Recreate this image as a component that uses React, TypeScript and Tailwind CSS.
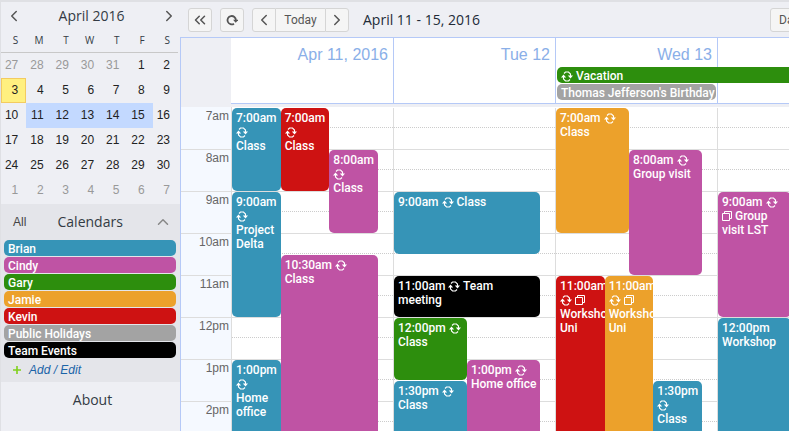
import clsx from 'clsx';
import { ChevronLeft, ChevronRight, ChevronUp, ChevronsLeft } from 'lucide-react';

const HOUR_HEIGHT = 42;
const FIRST_HOUR = 7;

const COLORS = {
    brian: 'bg-[#3694b7]',
    cindy: 'bg-[#bf53a4]',
    gary: 'bg-[#2d8e0d]',
    jamie: 'bg-[#eca12b]',
    kevin: 'bg-[#ce1212]',
    holidays: 'bg-[#a3a3a3]',
    team: 'bg-black',
};

type Owner = keyof typeof COLORS;

interface CalEvent {
    owner: Owner;
    time: string;
    title: string;
    start: number;
    hours: number;
    lane?: number;
    span?: number;
    lanes?: number;
    repeats?: boolean;
    copies?: boolean;
}

const CALENDARS: { owner: Owner; name: string }[] = [
    { owner: 'brian', name: 'Brian' },
    { owner: 'cindy', name: 'Cindy' },
    { owner: 'gary', name: 'Gary' },
    { owner: 'jamie', name: 'Jamie' },
    { owner: 'kevin', name: 'Kevin' },
    { owner: 'holidays', name: 'Public Holidays' },
    { owner: 'team', name: 'Team Events' },
];

const DAYS: { label: string; events: CalEvent[] }[] = [
    {
        label: 'Apr 11, 2016',
        events: [
            { owner: 'brian', time: '7:00am', title: 'Class', start: 7, hours: 2, lane: 0, lanes: 3, repeats: true },
            { owner: 'kevin', time: '7:00am', title: 'Class', start: 7, hours: 2, lane: 1, lanes: 3, repeats: true },
            { owner: 'cindy', time: '8:00am', title: 'Class', start: 8, hours: 2, lane: 2, lanes: 3, repeats: true },
            { owner: 'brian', time: '9:00am', title: 'Project Delta', start: 9, hours: 3, lane: 0, lanes: 3, repeats: true },
            { owner: 'cindy', time: '10:30am', title: 'Class', start: 10.5, hours: 5, lane: 1, span: 2, lanes: 3, repeats: true },
            { owner: 'brian', time: '1:00pm', title: 'Home office', start: 13, hours: 3, lane: 0, lanes: 3, repeats: true },
        ],
    },
    {
        label: 'Tue 12',
        events: [
            { owner: 'brian', time: '9:00am', title: 'Class', start: 9, hours: 1.5, repeats: true },
            { owner: 'team', time: '11:00am', title: 'Team meeting', start: 11, hours: 1, repeats: true },
            { owner: 'gary', time: '12:00pm', title: 'Class', start: 12, hours: 1.5, lane: 0, lanes: 2, repeats: true },
            { owner: 'cindy', time: '1:00pm', title: 'Home office', start: 13, hours: 3, lane: 1, lanes: 2, repeats: true },
            { owner: 'brian', time: '1:30pm', title: 'Class', start: 13.5, hours: 2, lane: 0, lanes: 2, repeats: true },
        ],
    },
    {
        label: 'Wed 13',
        events: [
            { owner: 'jamie', time: '7:00am', title: 'Class', start: 7, hours: 3, lane: 0, lanes: 2, repeats: true },
            { owner: 'cindy', time: '8:00am', title: 'Group visit', start: 8, hours: 3, lane: 1, lanes: 2, repeats: true },
            { owner: 'kevin', time: '11:00am', title: 'Workshop Uni', start: 11, hours: 5, lane: 0, lanes: 3, repeats: true, copies: true },
            { owner: 'jamie', time: '11:00am', title: 'Workshop Uni', start: 11, hours: 5, lane: 1, lanes: 3, repeats: true, copies: true },
            { owner: 'brian', time: '1:30pm', title: 'Class', start: 13.5, hours: 2, lane: 2, lanes: 3, repeats: true },
        ],
    },
    {
        label: 'Thu 14',
        events: [
            { owner: 'cindy', time: '9:00am', title: 'Group visit LST', start: 9, hours: 3, lane: 0, lanes: 2, repeats: true, copies: true },
            { owner: 'brian', time: '12:00pm', title: 'Workshop', start: 12, hours: 4, lane: 0, lanes: 2 },
        ],
    },
    { label: 'Fri 15', events: [] },
];

const HOURS = ['7am', '8am', '9am', '10am', '11am', '12pm', '1pm', '2pm'];

// Six weeks starting on Sunday, March 27
const MONTH_CELLS = Array.from({ length: 42 }, (_, i) => {
    const date = new Date(2016, 2, 27 + i);
    return { day: date.getDate(), inMonth: date.getMonth() === 3 };
});

function RepeatIcon() {
    return (
        <svg viewBox="0 0 12 11" className="inline-block h-[11px] w-3 align-[-2px]" fill="none" stroke="white" aria-hidden="true">
            <path d="M3 2.5L4.5 1H7.5L9.5 3V5M9 8.5L7.5 10H4.5L2.5 8V6" strokeWidth="1.1" />
            <path d="M-0.2 6.6L2.5 3.6L5.2 6.6ZM6.8 4.4L9.5 7.4L12.2 4.4Z" fill="white" stroke="none" />
        </svg>
    );
}

function CopyIcon() {
    return (
        <svg viewBox="0 0 10 10" className="inline-block size-[10px] align-[-1px]" fill="none" stroke="white" aria-hidden="true">
            <path d="M0.5 2.5H7.5V9.5H0.5ZM2.5 2.5V0.5H9.5V7.5H7.5" />
        </svg>
    );
}

function RefreshIcon() {
    return (
        <svg viewBox="0 0 12 12" className="size-3" fill="none" stroke="#555" strokeWidth="1.8" aria-hidden="true">
            <path d="M8 9.7A4.2 4.2 0 1 1 9.9 6.2" />
            <path d="M7 5.8H12.4L9.7 8.8Z" fill="#555" stroke="none" />
        </svg>
    );
}

function EventBlock({ event }: { event: CalEvent }) {
    const { lane = 0, span = 1, lanes = 1 } = event;
    return (
        <div
            className={clsx(
                "absolute overflow-hidden rounded-[5px] pt-[3px] pr-0.5 pl-1 font-['Roboto',sans-serif] text-xs/[14px] font-medium text-white",
                COLORS[event.owner],
            )}
            style={{
                top: (event.start - FIRST_HOUR) * HOUR_HEIGHT,
                height: event.hours * HOUR_HEIGHT - 1,
                left: `${(lane / lanes) * 100}%`,
                width: `${(span / lanes) * 100}%`,
            }}
        >
            {event.time} {event.repeats && <RepeatIcon />} {event.copies && <CopyIcon />} {event.title}
        </div>
    );
}

function MiniMonth() {
    return (
        <section className="mb-px pr-0.5 font-['Open_Sans',sans-serif] text-[#333b44]">
            <div className="flex h-[27px] items-center justify-between pl-1">
                <button aria-label="Previous month"><ChevronLeft className="size-[18px] text-[#555]" /></button>
                <h2 className="text-sm">April 2016</h2>
                <button aria-label="Next month"><ChevronRight className="size-[18px] text-[#555]" /></button>
            </div>
            <div className="grid h-6 grid-cols-7 items-center border-b border-[#c8c8c8] text-right text-[10px]">
                {['S', 'M', 'T', 'W', 'T', 'F', 'S'].map((d, i) => (
                    <span key={i} className="pr-2">{d}</span>
                ))}
            </div>
            <div className="grid grid-cols-7 font-['Liberation_Sans',sans-serif] text-xs">
                {MONTH_CELLS.map(({ day, inMonth }, i) => (
                    <button
                        key={i}
                        className={clsx(
                            'h-[25px] pr-2 pb-0.5 text-right',
                            inMonth ? 'text-[#222]' : 'text-[#999]',
                            i === 7 && 'bg-[#fff080] outline outline-[#f3cb60] -outline-offset-1',
                            i >= 15 && i <= 19 && 'bg-[#c3d9ff]',
                        )}
                    >
                        {day}
                    </button>
                ))}
            </div>
        </section>
    );
}

function CalendarList() {
    return (
        <section className="bg-[#e4e5ea]">
            <div className="flex h-9 items-center justify-between pr-2 pl-3 text-[#444]">
                <button className="text-xs">All</button>
                <h2 className="font-['Open_Sans',sans-serif] text-sm text-[#333b44]">Calendars</h2>
                <button aria-label="Collapse calendars"><ChevronUp className="size-[18px] text-[#888]" /></button>
            </div>
            <ul className="flex flex-col gap-px pr-1 pl-[3px] font-['Roboto',sans-serif] text-xs/[16px] font-medium text-white">
                {CALENDARS.map(({ owner, name }) => (
                    <li key={owner}>
                        <button className={clsx('block h-4 w-full rounded-[5px] px-1 pt-px text-left', COLORS[owner])}>{name}</button>
                    </li>
                ))}
            </ul>
            <a href="#edit" className="flex h-6 items-center gap-2 pl-2 text-xs text-[#1b64a8] italic">
                <svg viewBox="0 0 8 8" className="ml-1 size-2" stroke="#7fd01c" strokeWidth="1.6" aria-hidden="true">
                    <path d="M4 0V8M0 4H8" />
                </svg>
                Add / Edit
            </a>
        </section>
    );
}

const toolButton = 'flex h-6 items-center justify-center border-[#d5d5d5] bg-[#f5f5f5] text-[#555]';

function Toolbar() {
    return (
        <header className="flex h-[35px] items-center pl-2">
            <button className={clsx(toolButton, 'w-6 shrink-0 rounded-[3px] border')} aria-label="Hide sidebar">
                <ChevronsLeft className="size-[18px]" />
            </button>
            <button className={clsx(toolButton, 'ml-2 w-6 shrink-0 rounded-[3px] border')} aria-label="Refresh">
                <RefreshIcon />
            </button>
            <div className="ml-2 flex shrink-0">
                <button className={clsx(toolButton, 'w-6 rounded-l-[3px] border')} aria-label="Previous week">
                    <ChevronLeft className="size-[18px]" />
                </button>
                <button className={clsx(toolButton, "w-[49px] border-y font-['Roboto',sans-serif] text-xs")}>Today</button>
                <button className={clsx(toolButton, 'w-6 rounded-r-[3px] border')} aria-label="Next week">
                    <ChevronRight className="size-[18px]" />
                </button>
            </div>
            <h1 className="ml-3.5 min-w-[407px] flex-1 font-['Open_Sans',sans-serif] text-sm text-[#222b38]">April 11 - 15, 2016</h1>
            <button className={clsx(toolButton, "mr-2 shrink-0 rounded-[3px] border px-2 font-['Roboto',sans-serif] text-xs")}>Day</button>
        </header>
    );
}

function WeekHeader() {
    return (
        <div className="flex">
            <div className="w-[50px] shrink-0" />
            <div className="relative grid flex-1 grid-cols-[repeat(5,minmax(162px,1fr))] border-b border-[#b5c9f7] bg-white pl-px">
                {DAYS.map((day) => (
                    <div key={day.label} className="h-[65px] border-r border-[#b5c9f7] pt-1 pr-[5px] text-right text-base/[26px] text-[#8aafe8]">
                        {day.label}
                    </div>
                ))}
                {/* All-day bars lie over the day cells */}
                <div className="absolute inset-x-0 top-[29px] grid grid-cols-[repeat(5,minmax(162px,1fr))] gap-y-px pl-px font-['Roboto',sans-serif] text-xs/[16px] font-medium text-white">
                    <div className={clsx('col-span-3 col-start-3 ml-px h-4 rounded-[5px] px-1 pt-px', COLORS.gary)}>
                        <RepeatIcon /> Vacation
                    </div>
                    <div className={clsx('col-start-3 mr-0.5 ml-px h-4 rounded-[5px] px-1 pt-px whitespace-nowrap', COLORS.holidays)}>
                        Thomas Jefferson's Birthday
                    </div>
                </div>
            </div>
        </div>
    );
}

function WeekGrid() {
    return (
        <div className="mt-[3px] flex">
            <div className="w-[50px] shrink-0 bg-[#f5f9ff] pt-px text-right text-xs/[17px] text-[#666]">
                {HOURS.map((hour) => (
                    <div key={hour} className="h-[42px] border-b border-[#ddd] pr-0.5">{hour}</div>
                ))}
            </div>
            <div className="grid flex-1 grid-cols-[repeat(5,minmax(162px,1fr))] border-l border-[#ddd] bg-white pt-px">
                {DAYS.map((day) => (
                    <div key={day.label} className="relative border-r border-[#ddd]">
                        {HOURS.map((hour) => (
                            <div key={hour} className="h-[42px] border-b border-[#ddd]">
                                <div className="h-5 border-b border-dotted border-[#ccc]" />
                            </div>
                        ))}
                        <div className="absolute inset-y-0 right-[15px] left-0">
                            {day.events.map((event, i) => (
                                <EventBlock key={i} event={event} />
                            ))}
                        </div>
                    </div>
                ))}
            </div>
        </div>
    );
}

export default function App() {
    return (
        <div className="flex h-screen overflow-hidden border-t-2 border-l border-[#dfe0e4] bg-[#eeeff4] font-['Liberation_Sans',Arial,sans-serif]">
            <aside className="flex w-[179px] shrink-0 flex-col">
                <MiniMonth />
                <CalendarList />
                <a href="#about" className="py-2 pl-1 text-center font-['Open_Sans',sans-serif] text-sm text-[#333b44]">About</a>
            </aside>
            <main className="min-w-0 flex-1 overflow-hidden">
                <Toolbar />
                <div className="border-t border-l border-[#b5c9f7]">
                    <WeekHeader />
                    <WeekGrid />
                </div>
            </main>
        </div>
    );
}
